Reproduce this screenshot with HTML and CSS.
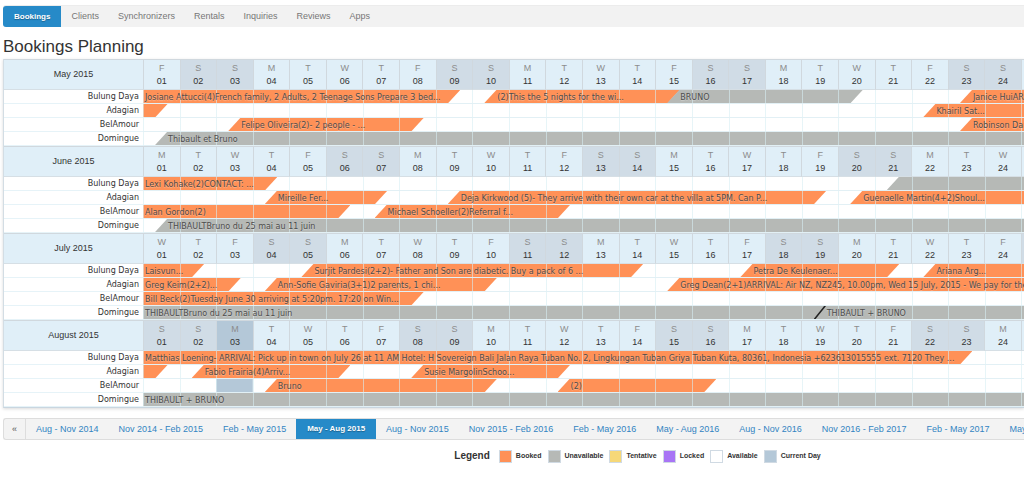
FILE: index.html
```html
<!DOCTYPE html>
<html lang="en">
<head>
<meta charset="utf-8">
<title>Bookings Planning</title>
<link rel="stylesheet" href="styles.css">
</head>
<body>
<nav class="nav">
<a class="nav-link active" href="#">Bookings</a><a class="nav-link" href="#">Clients</a><a class="nav-link" href="#">Synchronizers</a><a class="nav-link" href="#">Rentals</a><a class="nav-link" href="#">Inquiries</a><a class="nav-link" href="#">Reviews</a><a class="nav-link" href="#">Apps</a>
</nav>
<main>
<h1 class="title">Bookings Planning</h1>
<div class="planning-wrap">
<table class="planning">
<colgroup><col class="label-col"><col span="25"></colgroup>
<tbody>
<tr class="month"><th>May 2015</th><th><span>F</span>01</th><th class="we"><span>S</span>02</th><th class="we"><span>S</span>03</th><th><span>M</span>04</th><th><span>T</span>05</th><th><span>W</span>06</th><th><span>T</span>07</th><th><span>F</span>08</th><th class="we"><span>S</span>09</th><th class="we"><span>S</span>10</th><th><span>M</span>11</th><th><span>T</span>12</th><th><span>W</span>13</th><th><span>T</span>14</th><th><span>F</span>15</th><th class="we"><span>S</span>16</th><th class="we"><span>S</span>17</th><th><span>M</span>18</th><th><span>T</span>19</th><th><span>W</span>20</th><th><span>T</span>21</th><th><span>F</span>22</th><th class="we"><span>S</span>23</th><th class="we"><span>S</span>24</th><th></th></tr>
<tr class="rental"><th>Bulung Daya</th><td colspan="25"><div class="track">
<div class="bar booked cut-end" style="--start:0;--end:8.67"><span>Josiane Attucci(4)French family, 2 Adults, 2 Teenage Sons Prepare 3 bed...</span></div>
<div class="bar booked cut-start cut-end" style="--start:9.33;--end:14.67"><span>(2)This the 5 nights for the wi...</span></div>
<div class="bar unavailable cut-start cut-end" style="--start:14.33;--end:19.67"><span>BRUNO</span></div>
<div class="bar booked cut-start" style="--start:22.33;--end:25"><span>Janice HuiAR</span></div>
</div></td></tr>
<tr class="rental"><th>Adagian</th><td colspan="25"><div class="track">
<div class="bar booked cut-end" style="--start:0;--end:0.67"></div>
<div class="bar booked cut-start" style="--start:21.33;--end:25"><span>Khairil Sat...</span></div>
</div></td></tr>
<tr class="rental"><th>BelAmour</th><td colspan="25"><div class="track">
<div class="bar booked cut-start cut-end" style="--start:2.33;--end:7.67"><span>Felipe Oliveira(2)- 2 people - ...</span></div>
<div class="bar booked cut-start" style="--start:22.33;--end:25"><span>Robinson Dan</span></div>
</div></td></tr>
<tr class="rental"><th>Domingue</th><td colspan="25"><div class="track">
<div class="bar unavailable cut-start" style="--start:0.33;--end:25"><span>Thibault et Bruno</span></div>
</div></td></tr>
</tbody>
<tbody>
<tr class="month"><th>June 2015</th><th><span>M</span>01</th><th><span>T</span>02</th><th><span>W</span>03</th><th><span>T</span>04</th><th><span>F</span>05</th><th class="we"><span>S</span>06</th><th class="we"><span>S</span>07</th><th><span>M</span>08</th><th><span>T</span>09</th><th><span>W</span>10</th><th><span>T</span>11</th><th><span>F</span>12</th><th class="we"><span>S</span>13</th><th class="we"><span>S</span>14</th><th><span>M</span>15</th><th><span>T</span>16</th><th><span>W</span>17</th><th><span>T</span>18</th><th><span>F</span>19</th><th class="we"><span>S</span>20</th><th class="we"><span>S</span>21</th><th><span>M</span>22</th><th><span>T</span>23</th><th><span>W</span>24</th><th></th></tr>
<tr class="rental"><th>Bulung Daya</th><td colspan="25"><div class="track">
<div class="bar booked cut-end" style="--start:0;--end:3.67"><span>Lexi Kohake(2)CONTACT: ...</span></div>
<div class="bar unavailable cut-start" style="--start:20.33;--end:25"></div>
</div></td></tr>
<tr class="rental"><th>Adagian</th><td colspan="25"><div class="track">
<div class="bar booked cut-start cut-end" style="--start:3.33;--end:6.67"><span>Mireille Fer...</span></div>
<div class="bar booked cut-start cut-end" style="--start:8.33;--end:18.67"><span>Deja Kirkwood (5)- They arrive with their own car at the villa at 5PM. Can P...</span></div>
<div class="bar booked cut-start" style="--start:19.33;--end:25"><span>Guenaelle Martin(4+2)Shoul...</span></div>
</div></td></tr>
<tr class="rental"><th>BelAmour</th><td colspan="25"><div class="track">
<div class="bar booked cut-end" style="--start:0;--end:5.67"><span>Alan Gordon(2)</span></div>
<div class="bar booked cut-start cut-end" style="--start:6.33;--end:11.67"><span>Michael Schoeller(2)Referral f...</span></div>
</div></td></tr>
<tr class="rental"><th>Domingue</th><td colspan="25"><div class="track">
<div class="bar unavailable cut-start" style="--start:0.33;--end:25"><span>THIBAULTBruno du 25 mai au 11 juin</span></div>
</div></td></tr>
</tbody>
<tbody>
<tr class="month"><th>July 2015</th><th><span>W</span>01</th><th><span>T</span>02</th><th><span>F</span>03</th><th class="we"><span>S</span>04</th><th class="we"><span>S</span>05</th><th><span>M</span>06</th><th><span>T</span>07</th><th><span>W</span>08</th><th><span>T</span>09</th><th><span>F</span>10</th><th class="we"><span>S</span>11</th><th class="we"><span>S</span>12</th><th><span>M</span>13</th><th><span>T</span>14</th><th><span>W</span>15</th><th><span>T</span>16</th><th><span>F</span>17</th><th class="we"><span>S</span>18</th><th class="we"><span>S</span>19</th><th><span>M</span>20</th><th><span>T</span>21</th><th><span>W</span>22</th><th><span>T</span>23</th><th><span>F</span>24</th><th class="we"></th></tr>
<tr class="rental"><th>Bulung Daya</th><td colspan="25"><div class="track">
<div class="bar booked cut-end" style="--start:0;--end:1.67"><span>Laisvun...</span></div>
<div class="bar booked cut-start cut-end" style="--start:4.33;--end:13.67"><span>Surjit Pardesi(2+2)- Father and Son are diabetic. Buy a pack of 6 ...</span></div>
<div class="bar booked cut-start cut-end" style="--start:16.33;--end:20.67"><span>Petra De Keulenaer...</span></div>
<div class="bar booked cut-start" style="--start:21.33;--end:25"><span>Ariana Arg...</span></div>
</div></td></tr>
<tr class="rental"><th>Adagian</th><td colspan="25"><div class="track">
<div class="bar booked cut-end" style="--start:0;--end:2.67"><span>Greg Keim(2+2)...</span></div>
<div class="bar booked cut-start cut-end" style="--start:3.33;--end:9.67"><span>Ann-Sofie Gaviria(3+1)2 parents, 1 chi...</span></div>
<div class="bar booked cut-start" style="--start:14.33;--end:25"><span>Greg Dean(2+1)ARRIVAL: Air NZ, NZ245, 10.00pm, Wed 15 July, 2015 - We pay for the</span></div>
</div></td></tr>
<tr class="rental"><th>BelAmour</th><td colspan="25"><div class="track">
<div class="bar booked cut-end" style="--start:0;--end:7.67"><span>Bill Beck(2)Tuesday June 30 arriving at 5:20pm. 17:20 on Win...</span></div>
</div></td></tr>
<tr class="rental"><th>Domingue</th><td colspan="25"><div class="track">
<div class="bar unavailable cut-end" style="--start:0;--end:18.67"><span>THIBAULTBruno du 25 mai au 11 juin</span></div>
<div class="bar unavailable cut-start" style="--start:18.33;--end:25"><span>THIBAULT + BRUNO</span></div>
<div class="bar changeover" style="--start:18.33;--end:18.67"></div>
</div></td></tr>
</tbody>
<tbody>
<tr class="month"><th>August 2015</th><th class="we"><span>S</span>01</th><th class="we"><span>S</span>02</th><th class="today"><span>M</span>03</th><th><span>T</span>04</th><th><span>W</span>05</th><th><span>T</span>06</th><th><span>F</span>07</th><th class="we"><span>S</span>08</th><th class="we"><span>S</span>09</th><th><span>M</span>10</th><th><span>T</span>11</th><th><span>W</span>12</th><th><span>T</span>13</th><th><span>F</span>14</th><th class="we"><span>S</span>15</th><th class="we"><span>S</span>16</th><th><span>M</span>17</th><th><span>T</span>18</th><th><span>W</span>19</th><th><span>T</span>20</th><th><span>F</span>21</th><th class="we"><span>S</span>22</th><th class="we"><span>S</span>23</th><th><span>M</span>24</th><th></th></tr>
<tr class="rental"><th>Bulung Daya</th><td colspan="25"><div class="track">
<div class="bar booked cut-end" style="--start:0;--end:22.67"><span>Matthias Loening- ARRIVAL: Pick up in town on July 26 at 11 AM Hotel: H Sovereign Bali Jalan Raya Tuban No. 2, Lingkungan Tuban Griya Tuban Kuta, 80361, Indonesia +623613015555 ext. 7120 They ...</span></div>
</div></td></tr>
<tr class="rental"><th>Adagian</th><td colspan="25"><div class="track">
<div class="bar booked cut-end" style="--start:0;--end:0.67"></div>
<div class="bar booked cut-start cut-end" style="--start:1.33;--end:5.67"><span>Fabio Frairia(4)Arriv...</span></div>
<div class="bar booked cut-start cut-end" style="--start:7.33;--end:11.67"><span>Susie MargolinSchoo...</span></div>
</div></td></tr>
<tr class="rental"><th>BelAmour</th><td colspan="25"><div class="track">
<div class="bar current" style="--start:2;--end:3"></div>
<div class="bar booked cut-start cut-end" style="--start:3.33;--end:9.67"><span>Bruno</span></div>
<div class="bar booked cut-start cut-end" style="--start:11.33;--end:15.67"><span>(2)</span></div>
</div></td></tr>
<tr class="rental"><th>Domingue</th><td colspan="25"><div class="track">
<div class="bar unavailable" style="--start:0;--end:25"><span>THIBAULT + BRUNO</span></div>
</div></td></tr>
</tbody>
</table>
</div>
<nav class="pager" aria-label="Periods">
<a class="page prev" href="#">«</a><a class="page" href="#">Aug - Nov 2014</a><a class="page" href="#">Nov 2014 - Feb 2015</a><a class="page" href="#">Feb - May 2015</a><a class="page active" href="#">May - Aug 2015</a><a class="page" href="#">Aug - Nov 2015</a><a class="page" href="#">Nov 2015 - Feb 2016</a><a class="page" href="#">Feb - May 2016</a><a class="page" href="#">May - Aug 2016</a><a class="page" href="#">Aug - Nov 2016</a><a class="page" href="#">Nov 2016 - Feb 2017</a><a class="page" href="#">Feb - May 2017</a><a class="page" href="#">May - Aug 2017</a>
</nav>
<div class="legend">
<strong class="legend-title">Legend</strong>
<span class="key"><i class="swatch booked"></i>Booked</span>
<span class="key"><i class="swatch unavailable"></i>Unavailable</span>
<span class="key"><i class="swatch tentative"></i>Tentative</span>
<span class="key"><i class="swatch locked"></i>Locked</span>
<span class="key"><i class="swatch"></i>Available</span>
<span class="key"><i class="swatch current"></i>Current Day</span>
</div>
</main>
</body>
</html>
```
FILE: styles.css
```css
* { box-sizing: border-box; }

body {
  margin: 0;
  padding: 5px 0 0 3px;
  overflow-x: hidden;
  background: #fff;
  color: #333;
  font: 9px/20px "Liberation Sans", Arial, sans-serif;
}

.nav {
  display: flex;
  height: 22px;
  background: #f2f2f2;
  border-top: 1px solid #ececec;
  border-radius: 3px 0 0 3px;
}

.nav-link {
  padding: 0 9px 0 10px;
  color: #777;
  text-decoration: none;
  line-height: 21px;
}

.nav-link.active,
.page.active {
  padding: 0 11px;
  background: #268ac8;
  color: #fff;
  font-size: 8px;
  font-weight: bold;
  text-shadow: 0 1px 1px rgba(0, 0, 0, .3);
}

.nav-link.active { border-radius: 3px 0 0 3px; }

.title {
  margin: 10px 0 2px;
  font-size: 17px;
  font-weight: normal;
  line-height: 20px;
}

.planning-wrap {
  overflow: hidden;
  border-left: 1px solid #d3dde4;
  border-bottom: 1px solid #c9d6e0;
  box-shadow: 0 1px 3px rgba(0, 0, 0, .15);
}

.planning {
  width: 103.3%;
  table-layout: fixed;
  border-collapse: separate;
  border-spacing: 0;
}

.label-col { width: 139px; }

.planning th,
.planning td { padding: 0; font-weight: normal; }

.month th {
  height: 31px;
  border-left: 1px solid #d0d8de;
  border-top: 1px solid #d0d8de;
  border-bottom: 1px solid #d6dfe5;
  background: #e0eff8;
  line-height: 13px;
}

.month th:first-child { border-left: 0; }
.month th span { display: block; color: #8c8c8c; }
.month .we { background: #d0dce6; }
.month .today { background: #b4c8d8; }

.planning .rental th {
  height: 14px;
  padding-right: 4px;
  border-bottom: 1px solid #e6f3f8;
  font: 8px/13px "DejaVu Sans", Verdana, sans-serif;
  text-align: right;
}

.track {
  position: relative;
  height: 14px;
  overflow: hidden;
  border-bottom: 1px solid #e2f0f5;
}

/* Day lines run over the bars and under their captions. */
.track::after {
  content: "";
  position: absolute;
  inset: 0;
  z-index: 1;
  background: repeating-linear-gradient(to right, rgba(215, 238, 243, .6) 0 1px, transparent 1px 4%);
}

.bar {
  --cut-start: 0px;
  --cut-end: 0px;
  position: absolute;
  top: 0;
  bottom: 0;
  left: calc(var(--start) * 4%);
  right: calc(100% - var(--end) * 4%);
  padding-left: 2px;
  color: #4d4d4d;
  font: 8px/16px "DejaVu Sans", Verdana, sans-serif;
  text-shadow: 0 1px 1px rgba(255, 255, 255, .35);
  white-space: nowrap;
}

.bar::before {
  content: "";
  position: absolute;
  inset: 0;
  background: var(--fill);
  clip-path: polygon(var(--cut-start) 0, 100% 0, calc(100% - var(--cut-end)) 100%, 0 100%);
}

.bar span {
  position: relative;
  z-index: 2;
}

.cut-start { --cut-start: 12px; padding-left: 13px; }
.cut-end { --cut-end: 12px; }

.changeover { --fill: #222; }
.changeover::before { clip-path: polygon(calc(100% - 2px) 0, 100% 0, 2px 100%, 0 100%); }

.booked { --fill: #ff9157; }
.unavailable { --fill: #b6b9b6; }
.tentative { --fill: #f6d878; }
.locked { --fill: #a875f5; }
.current { --fill: #b4c8d8; }

.pager {
  display: flex;
  height: 22px;
  margin-top: 10px;
  overflow: hidden;
  border: 1px solid #ddd;
  border-right: 0;
  border-radius: 3px 0 0 3px;
  background: #f3f3f3;
}

.page {
  flex: none;
  padding: 0 10px;
  color: #3284c2;
  text-decoration: none;
}

.prev {
  width: 22px;
  padding: 0 8px;
  border-right: 1px solid #ddd;
  color: #555;
}

.legend {
  display: flex;
  align-items: center;
  gap: 6px;
  margin-top: 6px;
  padding-left: 44.2%;
  font-size: 7px;
  font-weight: bold;
  white-space: nowrap;
}

.legend-title { margin-right: 3px; font-size: 10px; }

.key {
  display: flex;
  align-items: center;
  gap: 4px;
}

.swatch {
  width: 13px;
  height: 13px;
  border: 1px solid #d0dae3;
  background: var(--fill);
}
```
